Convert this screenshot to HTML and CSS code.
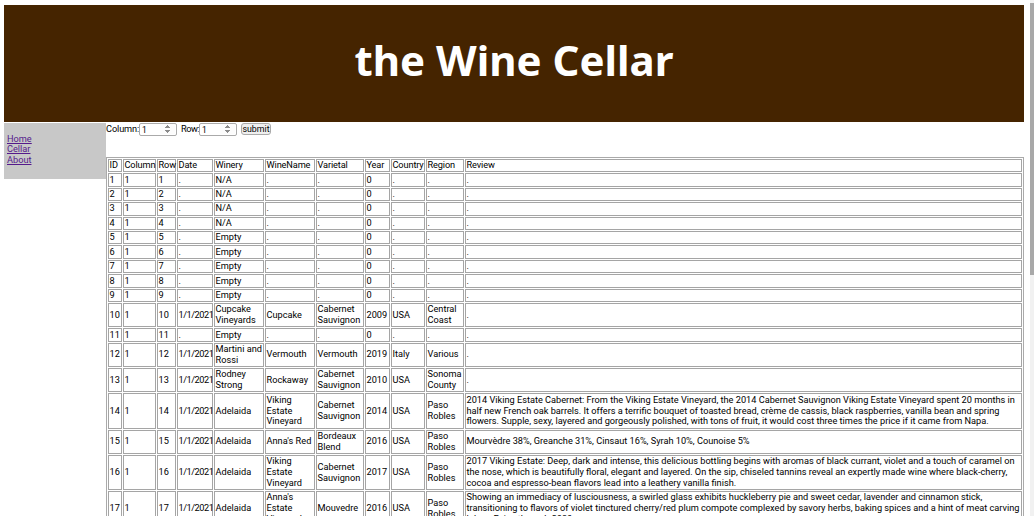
FILE: index.html
```html
<!DOCTYPE html>
<html lang="en">
<head>
<meta charset="utf-8">
<title>the Wine Cellar</title>
<link rel="stylesheet" href="styles.css">
</head>
<body>
<header class="banner"><h1>the Wine Cellar</h1></header>
<div class="layout">
<nav class="side">
<a href="#">Home</a>
<a href="#">Cellar</a>
<a href="#">About</a>
</nav>
<main class="content">
<form class="slot-form">
<label class="label-col">Column:</label><input type="number" value="1"><label class="label-row">Row:</label><input type="number" value="1"><button type="button">submit</button>
</form>
<table>
<colgroup><col class="c-id"><col class="c-col"><col class="c-row"><col class="c-date"><col class="c-winery"><col class="c-name"><col class="c-var"><col class="c-year"><col class="c-country"><col class="c-region"><col></colgroup>
<tr><td>ID</td><td>Column</td><td>Row</td><td>Date</td><td>Winery</td><td>WineName</td><td>Varietal</td><td>Year</td><td>Country</td><td>Region</td><td>Review</td></tr>
<tr><td>1</td><td>1</td><td>1</td><td>.</td><td>N/A</td><td>.</td><td>.</td><td>0</td><td>.</td><td>.</td><td>.</td></tr>
<tr><td>2</td><td>1</td><td>2</td><td>.</td><td>N/A</td><td>.</td><td>.</td><td>0</td><td>.</td><td>.</td><td>.</td></tr>
<tr><td>3</td><td>1</td><td>3</td><td>.</td><td>N/A</td><td>.</td><td>.</td><td>0</td><td>.</td><td>.</td><td>.</td></tr>
<tr><td>4</td><td>1</td><td>4</td><td>.</td><td>N/A</td><td>.</td><td>.</td><td>0</td><td>.</td><td>.</td><td>.</td></tr>
<tr><td>5</td><td>1</td><td>5</td><td>.</td><td>Empty</td><td>.</td><td>.</td><td>0</td><td>.</td><td>.</td><td>.</td></tr>
<tr><td>6</td><td>1</td><td>6</td><td>.</td><td>Empty</td><td>.</td><td>.</td><td>0</td><td>.</td><td>.</td><td>.</td></tr>
<tr><td>7</td><td>1</td><td>7</td><td>.</td><td>Empty</td><td>.</td><td>.</td><td>0</td><td>.</td><td>.</td><td>.</td></tr>
<tr><td>8</td><td>1</td><td>8</td><td>.</td><td>Empty</td><td>.</td><td>.</td><td>0</td><td>.</td><td>.</td><td>.</td></tr>
<tr><td>9</td><td>1</td><td>9</td><td>.</td><td>Empty</td><td>.</td><td>.</td><td>0</td><td>.</td><td>.</td><td>.</td></tr>
<tr><td>10</td><td>1</td><td>10</td><td>1/1/2021</td><td>Cupcake Vineyards</td><td>Cupcake</td><td>Cabernet Sauvignon</td><td>2009</td><td>USA</td><td>Central Coast</td><td>.</td></tr>
<tr><td>11</td><td>1</td><td>11</td><td>.</td><td>Empty</td><td>.</td><td>.</td><td>0</td><td>.</td><td>.</td><td>.</td></tr>
<tr><td>12</td><td>1</td><td>12</td><td>1/1/2021</td><td>Martini and Rossi</td><td>Vermouth</td><td>Vermouth</td><td>2019</td><td>Italy</td><td>Various</td><td>.</td></tr>
<tr><td>13</td><td>1</td><td>13</td><td>1/1/2021</td><td>Rodney Strong</td><td>Rockaway</td><td>Cabernet Sauvignon</td><td>2010</td><td>USA</td><td>Sonoma County</td><td>.</td></tr>
<tr><td>14</td><td>1</td><td>14</td><td>1/1/2021</td><td>Adelaida</td><td>Viking Estate Vineyard</td><td>Cabernet Sauvignon</td><td>2014</td><td>USA</td><td>Paso Robles</td><td>2014 Viking Estate Cabernet: From the Viking Estate Vineyard, the 2014 Cabernet Sauvignon Viking Estate Vineyard spent 20 months in half new French oak barrels. It offers a terrific bouquet of toasted bread, crème de cassis, black raspberries, vanilla bean and spring flowers. Supple, sexy, layered and gorgeously polished, with tons of fruit, it would cost three times the price if it came from Napa.</td></tr>
<tr><td>15</td><td>1</td><td>15</td><td>1/1/2021</td><td>Adelaida</td><td>Anna's Red</td><td>Bordeaux Blend</td><td>2016</td><td>USA</td><td>Paso Robles</td><td>Mourvèdre 38%, Greanche 31%, Cinsaut 16%, Syrah 10%, Counoise 5%</td></tr>
<tr><td>16</td><td>1</td><td>16</td><td>1/1/2021</td><td>Adelaida</td><td>Viking Estate Vineyard</td><td>Cabernet Sauvignon</td><td>2017</td><td>USA</td><td>Paso Robles</td><td>2017 Viking Estate: Deep, dark and intense, this delicious bottling begins with aromas of black currant, violet and a touch of caramel on the nose, which is beautifully floral, elegant and layered. On the sip, chiseled tannins reveal an expertly made wine where black-cherry, cocoa and espresso-bean flavors lead into a leathery vanilla finish.</td></tr>
<tr><td>17</td><td>1</td><td>17</td><td>1/1/2021</td><td>Adelaida</td><td>Anna's Estate Vineyard</td><td>Mouvedre</td><td>2016</td><td>USA</td><td>Paso Robles</td><td>Showing an immediacy of lusciousness, a swirled glass exhibits huckleberry pie and sweet cedar, lavender and cinnamon stick, transitioning to flavors of violet tinctured cherry/red plum compote complexed by savory herbs, baking spices and a hint of meat carving lobes. Enjoy through 2030.</td></tr>
</table>
</main>
</div>
<div class="scrollbar"><div class="scrollbar-thumb"></div></div>
</body>
</html>
```
FILE: styles.css
```css
html { background: #fff; }
html::-webkit-scrollbar { display: none; }
body {
  margin: 5px 10px 0 4px;
  font-family: Roboto, "Noto Sans", sans-serif;
  font-size: 9.2px;
  color: #000;
}
.banner {
  background: #452400;
  height: 117px;
  display: flex;
  align-items: center;
  justify-content: center;
  margin-bottom: 1px;
}
.banner h1 {
  margin: 0 0 8px;
  color: #fff;
  font-family: "Noto Sans", sans-serif;
  font-size: 42px;
  font-weight: 700;
}
.layout { display: flex; align-items: flex-start; }
.side {
  width: 102px;
  height: 56px;
  flex: none;
  background: #c8c8c8;
  box-sizing: border-box;
  padding: 10.5px 0 0 3px;
  display: flex;
  flex-direction: column;
  align-items: flex-start;
}
.side a { color: #551a8b; line-height: 10.8px; font-size: 9.2px; }
.content { flex: 1; min-width: 0; }
.slot-form {
  height: 34px;
  box-sizing: border-box;
  display: flex;
  align-items: flex-start;
  line-height: 12px;
}
.label-col { width: 33px; flex: none; letter-spacing: -0.1px; white-space: nowrap; }
.label-row { width: 18px; flex: none; letter-spacing: -0.5px; white-space: nowrap; }
.slot-form input {
  width: 38px;
  height: 13px;
  flex: none;
  box-sizing: border-box;
  font: inherit;
  font-size: 8.5px;
  padding: 0 1px 0 2px;
  margin: 0 4px 0 0;
  border: 1px solid #aaa;
  border-radius: 2px;
}
.slot-form input::-webkit-inner-spin-button { opacity: 1; height: 11px; }
.slot-form button {
  font: inherit;
  font-size: 8.8px;
  height: 12px;
  width: 30px;
  flex: none;
  padding: 0;
  border: 1px solid #aaa;
  border-radius: 3px;
  background: #efefef;
  line-height: 9px;
}
table {
  width: 100%;
  table-layout: fixed;
  border: 1px solid #aaa;
  border-spacing: 1px;
  border-collapse: separate;
}
td {
  border: 1px solid #a5a5a5;
  padding: 0.25px 0.5px;
  line-height: 10.9px;
}
tr:first-child td { letter-spacing: -0.12px; }
td:nth-child(4) { letter-spacing: -0.45px; }
.c-id { width: 14px; }
.c-col { width: 33px; }
.c-row { width: 19px; }
.c-date { width: 36px; }
.c-winery { width: 50px; }
.c-name { width: 50px; }
.c-var { width: 48px; }
.c-year { width: 25px; }
.c-country { width: 34px; }
.c-region { width: 38px; }
.scrollbar {
  position: fixed;
  top: 0;
  right: 0;
  bottom: 0;
  width: 4px;
  background: #f1f1f1;
}
.scrollbar-thumb { margin-top: 3px; height: 272px; background: #a8a8a8; }
```
